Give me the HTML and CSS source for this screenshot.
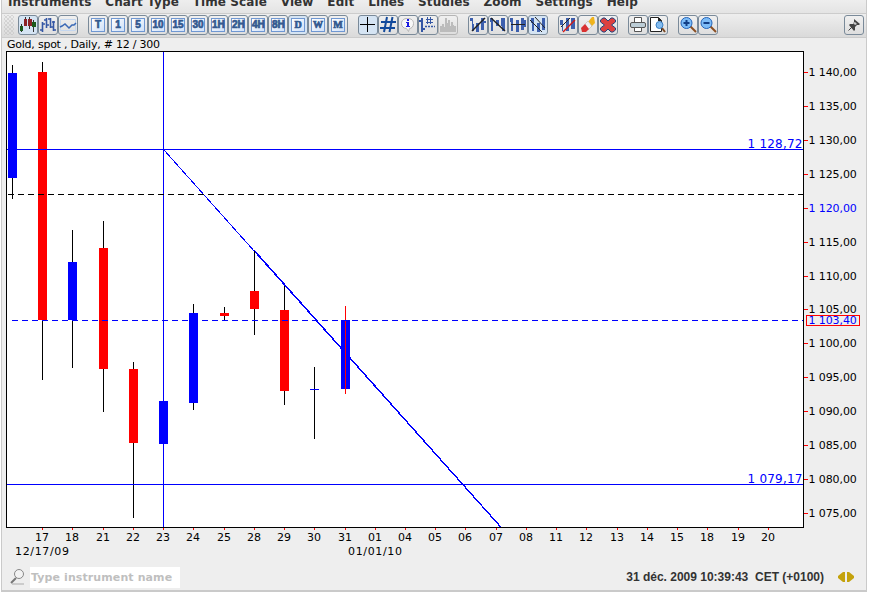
FILE: index.html
```
<!DOCTYPE html>
<html lang="en">
<head>
    <meta charset="UTF-8">
    <title>Gold, spot - Daily</title>
    <link rel="stylesheet" href="styles.css">
</head>
<body>
<div class="window">
    <div class="menubar">
        <span>Instruments</span><span>Chart Type</span><span>Time Scale</span><span>View</span><span>Edit</span><span>Lines</span><span>Studies</span><span>Zoom</span><span>Settings</span><span>Help</span>
    </div>

    <div class="toolbar">
        <div class="grip"></div>
        <!-- chart type -->
        <div class="group">
            <button class="btn active"><svg viewBox="0 0 20 20"><path d="M3.500 9v8M7.500 2v4M11.500 2v12M15.500 5v12" stroke="#333"/><path d="M2 11h3v5H2zM14 7h4v5h-4z" fill="#1c5a1c"/><path d="M6 4h3v7H6zM10 4h4v7h-4z" fill="#8c2226"/></svg></button>
            <button class="btn"><svg viewBox="0 0 20 20" fill="none" stroke="#3557a5" stroke-width="1.600"><path d="M4.500 7v10M2 15h3M4 9h3M8.500 3v10M6 5h3M8 10h3M12.500 3v10M10 4h3M12 12h3M15.500 6v10M14 7h3M16 15h2"/></svg></button>
            <button class="btn"><svg viewBox="0 0 20 20" fill="none" stroke="#3a68b5"><path d="M2.500 4.500h15v11h-15z" stroke="#c3d6ef"/><path d="M2 12l2-1 3-2 4 4 3-3h2l2-2" stroke-width="1.500"/></svg></button>
        </div>
        <!-- periods -->
        <div class="group">
            <button class="btn"><b class="tile">T</b></button>
            <button class="btn"><b class="tile">1</b></button>
            <button class="btn"><b class="tile">5</b></button>
            <button class="btn"><b class="tile">10</b></button>
            <button class="btn"><b class="tile">15</b></button>
            <button class="btn"><b class="tile">30</b></button>
            <button class="btn"><b class="tile">1H</b></button>
            <button class="btn"><b class="tile">2H</b></button>
            <button class="btn"><b class="tile">4H</b></button>
            <button class="btn"><b class="tile">8H</b></button>
            <button class="btn active"><b class="tile serif">D</b></button>
            <button class="btn"><b class="tile serif">W</b></button>
            <button class="btn"><b class="tile serif">M</b></button>
        </div>
        <!-- view -->
        <div class="group">
            <button class="btn active"><svg viewBox="0 0 20 20"><path d="M2 9.500h15M9.500 2v15" stroke="#000"/></svg></button>
            <button class="btn"><svg viewBox="0 0 20 20" fill="none" stroke="#124a9c" stroke-width="2"><path d="M3 7h15M2 13h15M9 2L6 17M14.500 2l-3 15"/></svg></button>
            <button class="btn"><svg viewBox="0 0 20 20"><path d="M9.500 3.500c4 0 6 2 6 5s-2 5-4 5l-1 3-2-3c-3 0-5-2-5-5s2-5 6-5z" fill="#f8f8f8" stroke="#b5b5b5"/><path d="M9 4h2v2H9zM8 7h3v4h1v1H8v-1h1V8H8z" fill="#1b1be0"/></svg></button>
            <button class="btn"><svg viewBox="0 0 20 20" fill="none" stroke="#3557a5"><path d="M4 3v14M1 6h2M4 14h3" stroke-width="2"/><path d="M8 4.500h7M8 7.500h7M9.500 2v7M12.500 2v7"/><path d="M7 11.500h10" stroke-dasharray="2 1" stroke-width="1.500"/></svg></button>
            <button class="btn disabled"><svg viewBox="0 0 20 20"><path d="M2 17v-6h2V9h2v3h1V3h2v5h1V5h2v6h1V7h2v3h1v1h2v6z" fill="#bcbcbc"/></svg></button>
        </div>
        <!-- lines -->
        <div class="group">
            <button class="btn"><svg viewBox="0 0 20 20"><path d="M2 3h3v6h1v7H4V6H2zM8 8h3v9H8zM13 3h3v3h2v2h-2v7h-3z" fill="#3c5fae"/><path d="M4 16L17 3" stroke="#222" stroke-width="1.400"/></svg></button>
            <button class="btn"><svg viewBox="0 0 20 20"><path d="M2 3h3v13H3V7H2zM8 5h3v6H8zM13 3h4v13h-3v-5h-1z" fill="#3c5fae"/><path d="M3 3l14 13" stroke="#222" stroke-width="1.400"/></svg></button>
            <button class="btn"><svg viewBox="0 0 20 20"><path d="M2 3h3v13H3V7H2zM8 5h3v12H8zM13 3h3v2h2v7h-2v3h-3z" fill="#3c5fae"/><path d="M3 9.500h14" stroke="#222"/></svg></button>
            <button class="btn active"><svg viewBox="0 0 20 20"><path d="M3 3h3v13H4V8H3zM9 8h3v9H9zM14 3h3v12h-3z" fill="#3c5fae"/><path d="M2 5l12 12M7 2l10 11" stroke="#222"/></svg></button>
        </div>
        <!-- drawing -->
        <div class="group">
            <button class="btn"><svg viewBox="0 0 20 20"><path d="M2 5h3v11H4v-6H2zM8 3h3v13H8zM13 3h4v11h-4z" fill="#3c5fae"/><path d="M3 12L12 3" stroke="#222"/><path d="M5 17L17 5" stroke="#d01818" stroke-width="1.500"/></svg></button>
            <button class="btn"><svg viewBox="0 0 20 20"><path d="M10 7l4-5h2l1 6-4 4z" fill="#f0b41c"/><path d="M7 9l3-3 4 5-4 4z" fill="#f0f0f0" stroke="#aaa" stroke-width=".5"/><path d="M3 13l4-4 4 5-3 3H4z" fill="#d93131"/></svg></button>
            <button class="btn"><svg viewBox="0 0 20 20"><path d="M2.500 5L5 3h2l3 3 3-3h2l2.500 2v2l-4 3 4 3v2L15 17h-2l-3-3-3 3H5l-2.500-2v-2l4-3-4-3z" fill="#dd4040" stroke="#26457e"/></svg></button>
        </div>
        <!-- print -->
        <div class="group">
            <button class="btn"><svg viewBox="0 0 20 20" stroke="#555"><path d="M6.500 2.500h7v5h-7z" fill="#fff"/><rect x="2.500" y="7.500" width="15" height="5" rx="1.500" fill="#bccdd6"/><path d="M6.500 12.500h7v4h-7z" fill="#fff"/></svg></button>
            <button class="btn"><svg viewBox="0 0 20 20"><path d="M2.500 2.500h8l3 3v11h-11z" fill="#fff" stroke="#222"/><path d="M10 2v4h4" fill="#222"/><path d="M14 13l3 4" stroke="#7b4a26" stroke-width="2"/><circle cx="11.500" cy="10" r="3.500" fill="#84bdf0" stroke="#3a7fc4"/></svg></button>
        </div>
        <!-- zoom -->
        <div class="group">
            <button class="btn"><svg viewBox="0 0 20 20"><path d="M12 11l6 6" stroke="#8a4f24" stroke-width="2"/><circle cx="8.500" cy="8" r="5.500" fill="#7dbcf7" stroke="#2464b8"/><path d="M5.500 8h6M8.500 5v6" stroke="#123f86" stroke-width="2"/></svg></button>
            <button class="btn"><svg viewBox="0 0 20 20"><path d="M12 11l6 6" stroke="#8a4f24" stroke-width="2"/><circle cx="8.500" cy="8" r="5.500" fill="#7dbcf7" stroke="#2464b8"/><path d="M5.500 8h6" stroke="#123f86" stroke-width="2"/></svg></button>
        </div>
        <button class="btn pin"><svg viewBox="0 0 20 20"><path d="M10 4l6 5-1 1h-2l-2 2v3l-1 1-5-6 1-1h3l1-2z" fill="#444"/><path d="M9 8l2-1 2 2-2 1z" fill="#ccc"/><path d="M4.500 15.500L8 12" stroke="#444"/></svg></button>
    </div>

    <svg class="chart" width="864" height="526" viewBox="2 38 864 526">
        <text x="7" y="48" textLength="153">Gold, spot , Daily, # 12 / 300</text>

        <g shape-rendering="crispEdges">
            <rect x="6.500" y="51.500" width="797" height="476" fill="#fff" stroke="#000"/>
            <path class="trend" d="M163.500 149.500L500.500 527M254.500 250.500L501 527"/>

            <!-- wicks -->
            <path class="wick" d="M12.500 65v134M42.500 62v318M72.500 230v138M103.500 221v191M133.500 362v156M193.500 304v106M224.500 307v13M254.500 251v84M284.500 286v119M314.500 367v72"/>

            <g class="up">
                <rect x="8" y="73" width="9" height="105"/>
                <rect x="68" y="262" width="9" height="58"/>
                <rect x="159" y="401" width="9" height="43"/>
                <rect x="189" y="313" width="9" height="90"/>
                <rect x="310" y="389" width="9" height="1"/>
                <rect x="341" y="320" width="9" height="69"/>
            </g>
            <g class="down">
                <rect x="38" y="72" width="9" height="248"/>
                <rect x="99" y="248" width="9" height="121"/>
                <rect x="129" y="369" width="9" height="74"/>
                <rect x="220" y="313" width="9" height="3"/>
                <rect x="250" y="291" width="9" height="18"/>
                <rect x="280" y="310" width="9" height="81"/>
            </g>
            <path d="M345.500 306v88" stroke="#f00"/>

            <!-- levels -->
            <path class="level" d="M7 149.500h796M7 484.500h796M163.500 52v475"/>
            <path d="M8 194.500h795" stroke="#000" stroke-dasharray="6 4"/>
            <path class="level" d="M12 320.500h791" stroke-dasharray="6 4"/>

            <path class="tick" d="M804 72.500h4M804 106.500h4M804 140.500h4M804 174.500h4M804 208.500h4M804 242.500h4M804 276.500h4M804 309.500h4M804 343.500h4M804 377.500h4M804 411.500h4M804 445.500h4M804 479.500h4M804 513.500h4"/>
            <path class="tick" d="M42.500 528v2M72.500 528v2M103.500 528v2M133.500 528v2M163.500 528v2M193.500 528v2M224.500 528v2M254.500 528v2M284.500 528v2M314.500 528v2M345.500 528v2M375.500 528v2M405.500 528v2M435.500 528v2M465.500 528v2M496.500 528v2M526.500 528v2M556.500 528v2M586.500 528v2M617.500 528v2M647.500 528v2M677.500 528v2M707.500 528v2M738.500 528v2M768.500 528v2"/>
            <rect x="806.500" y="315.500" width="53" height="10" fill="none" stroke="#f00"/>
        </g>

        <g class="blue big">
            <text x="747.500" y="148" textLength="55">1 128,72</text>
            <text x="747.500" y="483" textLength="55">1 079,17</text>
        </g>

        <!-- price axis -->
        <g class="prices">
            <text x="808.500" y="76">1 140,00</text>
            <text x="808.500" y="110">1 135,00</text>
            <text x="808.500" y="144">1 130,00</text>
            <text x="808.500" y="178">1 125,00</text>
            <text x="808.500" y="212" class="blue">1 120,00</text>
            <text x="808.500" y="246">1 115,00</text>
            <text x="808.500" y="280">1 110,00</text>
            <text x="808.500" y="313">1 105,00</text>
            <text x="808.500" y="324" class="blue">1 103,40</text>
            <text x="808.500" y="347">1 100,00</text>
            <text x="808.500" y="381">1 095,00</text>
            <text x="808.500" y="415">1 090,00</text>
            <text x="808.500" y="449">1 085,00</text>
            <text x="808.500" y="483">1 080,00</text>
            <text x="808.500" y="517">1 075,00</text>
        </g>

        <!-- date axis -->
        <g class="days">
            <text x="42" y="541">17</text><text x="72" y="541">18</text><text x="103" y="541">21</text><text x="133" y="541">22</text><text x="163" y="541">23</text>
            <text x="193" y="541">24</text><text x="224" y="541">25</text><text x="254" y="541">28</text><text x="284" y="541">29</text><text x="314" y="541">30</text>
            <text x="345" y="541">31</text><text x="375" y="541">01</text><text x="405" y="541">04</text><text x="435" y="541">05</text><text x="465" y="541">06</text>
            <text x="496" y="541">07</text><text x="526" y="541">08</text><text x="556" y="541">11</text><text x="586" y="541">12</text><text x="617" y="541">13</text>
            <text x="647" y="541">14</text><text x="677" y="541">15</text><text x="707" y="541">18</text><text x="738" y="541">19</text><text x="768" y="541">20</text>
        </g>
        <text x="15" y="555" textLength="54">12/17/09</text>
        <text x="348" y="555" textLength="54">01/01/10</text>
    </svg>

    <div class="statusbar">
        <svg class="lens" width="18" height="18" viewBox="0 0 18 18"><path d="M4 16h12" stroke="#ccc" stroke-width="2"/><path d="M3 15l5-5" stroke="#777" stroke-width="2"/><circle cx="11" cy="6" r="4.500" fill="#f2f2f2" stroke="#888"/></svg>
        <div class="search">Type instrument name</div>
        <div class="clock">31 déc. 2009 10:39:43&nbsp; CET (+0100)</div>
        <svg width="16" height="10" viewBox="0 0 16 10"><path d="M0 4l5-4h2v10H5L0 6zM9 0h2l5 4v2l-5 4H9z" fill="#c4a20c"/></svg>
    </div>
</div>
</body>
</html>
```
FILE: styles.css
```
body {
    margin: 0;
    background: #fff;
    font-family: "DejaVu Sans", Verdana, sans-serif;
    overflow: hidden;
}
.window {
    width: 864px;
    height: 590px;
    margin-left: 1px;
    background: #eee;
    border: solid #cacaca;
    border-width: 0 1px 2px;
}
.menubar {
    display: flex;
    gap: 13.8px;
    height: 13px;
    padding-left: 6px;
    overflow: hidden;
    border-bottom: 1px solid #ccc;
    background: linear-gradient(#eee, #e4e4e4);
    color: #333;
    font-size: 12px;
    font-weight: bold;
    line-height: 14px;
    letter-spacing: 0.1px;
    white-space: nowrap;
}
.menubar span {
    margin-top: -5px;
}
.toolbar {
    display: flex;
    align-items: flex-start;
    gap: 10px;
    height: 22px;
    padding: 1px 2px 0;
    border-bottom: 1px solid #ccc;
    background: linear-gradient(#eee, #dadada);
}
.grip {
    width: 10px;
    height: 20px;
    margin-right: -6px;
    background: radial-gradient(circle, #bbb 0.6px, transparent 0.8px) 0 0 / 4px 4px,
                radial-gradient(circle, #bbb 0.6px, transparent 0.8px) 2px 2px / 4px 4px;
}
.group {
    display: flex;
}
.btn {
    display: flex;
    align-items: center;
    justify-content: center;
    box-sizing: border-box;
    width: 20px;
    height: 20px;
    padding: 0;
    border: 1px solid #7a8a99;
    border-radius: 3px;
    background: linear-gradient(#f0f0f0, #dedede);
}
.btn svg {
    flex: none;
    width: 20px;
    height: 20px;
}
.btn.active {
    background: #d5e4f3;
}
.btn.disabled {
    border-color: #b5b5b5;
}
.pin {
    margin-left: auto;
}
.tile {
    flex: none;
    box-sizing: border-box;
    width: 14px;
    height: 14px;
    border: 1px solid #6f97d2;
    background: linear-gradient(135deg, #fff, #cfe0f8);
    color: #34598f;
    font: bold 10px/12px "Liberation Sans", Arial, sans-serif;
    text-align: center;
    -webkit-text-stroke: 0.7px #34598f;
}
.tile.serif {
    font-family: "Liberation Serif", serif;
}
.chart {
    display: block;
    font-size: 11px;
}
.chart text {
    fill: #000;
}
.chart .prices {
    letter-spacing: -0.1px;
}
.chart text.blue, .chart .blue text {
    fill: #00f;
}
.chart .big {
    font-size: 12px;
}
.days {
    text-anchor: middle;
}
.trend, .level {
    fill: none;
    stroke: #00f;
}
.wick {
    stroke: #000;
}
.tick {
    stroke: #f00;
}
.up {
    fill: #00f;
}
.down {
    fill: #f00;
}
.statusbar {
    display: flex;
    align-items: center;
    height: 26px;
    padding: 0 12px 0 6px;
}
.search {
    width: 149px;
    height: 21px;
    margin-left: 4px;
    padding-left: 1px;
    background: #fff;
    color: #bfbfbf;
    font-size: 11px;
    font-weight: bold;
    line-height: 21px;
    letter-spacing: 0.1px;
    white-space: nowrap;
}
.clock {
    margin-left: auto;
    margin-right: 14px;
    color: #333;
    font: bold 12px "Liberation Sans", Arial, sans-serif;
}
```
